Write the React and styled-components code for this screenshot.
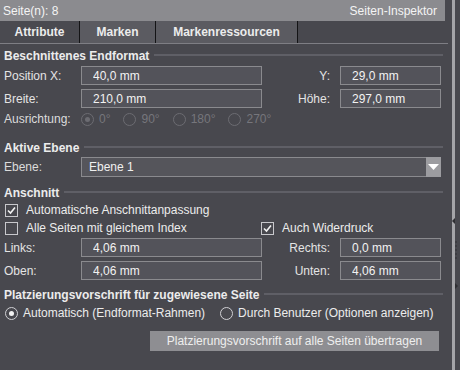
import styled, { createGlobalStyle } from 'styled-components';

const GlobalStyle = createGlobalStyle`
	body {
		margin: 0;
		background-color: #48484e;
		font-family: "Liberation Sans", Arial, sans-serif;
		font-size: 12px;
		color: #e6e6e6;
	}
`;

const Radio = ({ checked, disabled, children }) => (
	<OptionItem disabled={disabled}>
		<RadioCircle $checked={checked} $disabled={disabled} />
		{children}
	</OptionItem>
);

const Check = ({ checked, children }) => (
	<OptionItem>
		<CheckBox>
			{checked && (
				<svg width="11" height="11" viewBox="0 0 11 11">
					<path d="M2 5.5 L4.5 8 L9 2.5" fill="none" stroke="#f2f2f2" strokeWidth="1.6" />
				</svg>
			)}
		</CheckBox>
		{children}
	</OptionItem>
);

const App = () => {
	return (
		<>
			<GlobalStyle />
			<Window>
				<Panel>
					<Header>
						<span>Seite(n): 8</span>
						<span>Seiten-Inspektor</span>
					</Header>
					<TabBar>
						<Tab $width={80} $active>Attribute</Tab>
						<Tab $width={76}>Marken</Tab>
						<Tab $width={142}>Markenressourcen</Tab>
					</TabBar>
					<Body>
						<SectionTitle $top={4}>Beschnittenes Endformat</SectionTitle>
						<FieldGrid $top={2}>
							<Label>Position X:</Label>
							<Input defaultValue="40,0 mm" />
							<Label $right>Y:</Label>
							<Input defaultValue="29,0 mm" />
							<Label>Breite:</Label>
							<Input defaultValue="210,0 mm" />
							<Label $right>Höhe:</Label>
							<Input defaultValue="297,0 mm" />
						</FieldGrid>
						<OptionRow $top={3}>
							<RowLabel>Ausrichtung:</RowLabel>
							<RadioGroup $gap={13}>
								<Radio checked disabled>0°</Radio>
								<Radio disabled>90°</Radio>
								<Radio disabled>180°</Radio>
								<Radio disabled>270°</Radio>
							</RadioGroup>
						</OptionRow>

						<SectionTitle $top={13}>Aktive Ebene</SectionTitle>
						<OptionRow $top={1}>
							<RowLabel>Ebene:</RowLabel>
							<Select>
								<SelectValue>Ebene 1</SelectValue>
								<SelectArrow>
									<svg width="11" height="7" viewBox="0 0 11 7">
										<path d="M0 0 H11 L5.5 6 Z" fill="#ffffff" />
									</svg>
								</SelectArrow>
							</Select>
						</OptionRow>

						<SectionTitle $top={8}>Anschnitt</SectionTitle>
						<OptionRow $top={1} $indent>
							<Check checked>Automatische Anschnittanpassung</Check>
						</OptionRow>
						<CheckGrid $top={2}>
							<Check>Alle Seiten mit gleichem Index</Check>
							<Check checked>Auch Widerdruck</Check>
						</CheckGrid>
						<FieldGrid $top={2}>
							<Label>Links:</Label>
							<Input defaultValue="4,06 mm" />
							<Label $right>Rechts:</Label>
							<Input defaultValue="0,0 mm" />
							<Label>Oben:</Label>
							<Input defaultValue="4,06 mm" />
							<Label $right>Unten:</Label>
							<Input defaultValue="4,06 mm" />
						</FieldGrid>

						<SectionTitle $top={7}>Platzierungsvorschrift für zugewiesene Seite</SectionTitle>
						<OptionRow $top={2} $indent>
							<RadioGroup $gap={15}>
								<Radio checked>Automatisch (Endformat-Rahmen)</Radio>
								<Radio>Durch Benutzer (Optionen anzeigen)</Radio>
							</RadioGroup>
						</OptionRow>
						<ButtonRow>
							<ApplyButton>Platzierungsvorschrift auf alle Seiten übertragen</ApplyButton>
						</ButtonRow>
					</Body>
				</Panel>
				<Splitter>
					<Grip width="8" height="80" viewBox="0 0 8 80">
						<path d="M1 3 L4 0 L4 6 Z" fill="#2e2e32" />
						<circle cx="5" cy="24" r="0.8" fill="#2e2e32" />
						<circle cx="5" cy="28" r="0.8" fill="#2e2e32" />
						<circle cx="5" cy="32" r="0.8" fill="#2e2e32" />
						<circle cx="5" cy="36" r="0.8" fill="#2e2e32" />
						<circle cx="5" cy="40" r="0.8" fill="#2e2e32" />
						<path d="M7 68 L4 65 L4 71 Z" fill="#2e2e32" />
					</Grip>
				</Splitter>
			</Window>
		</>
	);
};

const Window = styled.div`
	width: 460px;
	height: 370px;
	display: flex;
	background-color: #48484e;
	overflow: hidden;
`;

const Panel = styled.div`
	flex: 0 0 448px;
	display: flex;
	flex-direction: column;
`;

const Header = styled.div`
	height: 21px;
	margin-right: 3px;
	padding: 0 8px 0 3px;
	display: flex;
	align-items: center;
	justify-content: space-between;
	background-color: #8b8b8f;
	color: #f4f4f4;
`;

const TabBar = styled.div`
	height: 22px;
	display: flex;
	border-bottom: 1px solid #7e7e84;
`;

const Tab = styled.div`
	width: ${(props) => props.$width}px;
	display: flex;
	align-items: center;
	justify-content: center;
	box-sizing: border-box;
	border-right: 1px solid #141416;
	background-color: ${(props) => (props.$active ? '#4a4a50' : '#5b5b61')};
	font-weight: bold;
	color: #ececec;
`;

const Body = styled.div`
	padding: 0 7px 0 4px;
	display: flex;
	flex-direction: column;
`;

const SectionTitle = styled.div`
	height: 16px;
	margin-top: ${(props) => props.$top}px;
	margin-right: -2px;
	display: flex;
	align-items: center;
	gap: 5px;
	font-weight: bold;
	color: #ececec;
	&::after {
		content: '';
		flex: 1;
		height: 2px;
		margin-top: -2px;
		background-color: #5f5f66;
	}
`;

const FieldGrid = styled.div`
	margin-top: ${(props) => props.$top}px;
	display: grid;
	grid-template-columns: 77px 181px 1fr 101px;
	grid-auto-rows: 19px;
	row-gap: 4px;
	align-items: center;
`;

const Label = styled.label`
	text-align: ${(props) => (props.$right ? 'right' : 'left')};
	padding-right: ${(props) => (props.$right ? '10px' : '0')};
	color: #e4e4e4;
`;

const Input = styled.input`
	width: 100%;
	height: 19px;
	box-sizing: border-box;
	padding: 0 0 0 11px;
	border: 1px solid #8a8a8e;
	background-color: #53535a;
	color: #f2f2f2;
	font-family: "Liberation Sans", Arial, sans-serif;
	font-size: 12px;
	outline: none;
`;

const OptionRow = styled.div`
	min-height: 16px;
	margin-top: ${(props) => props.$top}px;
	padding-left: ${(props) => (props.$indent ? '1px' : '0')};
	display: flex;
	align-items: center;
`;

const RowLabel = styled.span`
	flex: 0 0 77px;
	color: #dcdcdc;
`;

const RadioGroup = styled.div`
	display: flex;
	align-items: center;
	gap: ${(props) => props.$gap}px;
`;

const OptionItem = styled.span`
	display: flex;
	align-items: center;
	gap: 5px;
	color: ${(props) => (props.disabled ? '#76767c' : '#ececec')};
	white-space: nowrap;
`;

const RadioCircle = styled.span`
	width: 13px;
	height: 13px;
	box-sizing: border-box;
	border-radius: 50%;
	border: 1px solid ${(props) => (props.$disabled ? '#6c6c72' : '#d0d0d4')};
	display: flex;
	align-items: center;
	justify-content: center;
	&::after {
		content: '';
		display: ${(props) => (props.$checked ? 'block' : 'none')};
		width: 5px;
		height: 5px;
		border-radius: 50%;
		background-color: ${(props) => (props.$disabled ? '#6c6c72' : '#f2f2f2')};
	}
`;

const CheckBox = styled.span`
	width: 13px;
	height: 13px;
	box-sizing: border-box;
	margin-right: 3px;
	border: 1px solid #c8c8cc;
	display: flex;
	align-items: center;
	justify-content: center;
`;

const CheckGrid = styled.div`
	min-height: 16px;
	margin-top: ${(props) => props.$top}px;
	padding-left: 1px;
	display: grid;
	grid-template-columns: 256px 1fr;
	align-items: center;
`;

const Select = styled.div`
	flex: 1;
	height: 20px;
	box-sizing: border-box;
	display: flex;
	border-top: 1px solid #8a8a8e;
	border-bottom: 1px solid #8a8a8e;
	border-left: 1px solid #8a8a8e;
	background-color: #55555b;
`;

const SelectValue = styled.span`
	flex: 1;
	padding-left: 7px;
	display: flex;
	align-items: center;
	color: #f0f0f0;
`;

const SelectArrow = styled.span`
	width: 15px;
	margin: -1px 0;
	display: flex;
	align-items: center;
	justify-content: center;
	background-color: #9c9ca0;
`;

const ButtonRow = styled.div`
	margin-top: 10px;
	padding-right: 2px;
	display: flex;
	justify-content: flex-end;
`;

const ApplyButton = styled.button`
	width: 289px;
	height: 20px;
	padding: 0;
	border: 0;
	background-color: #8e8e92;
	color: #eeeeee;
	font-family: "Liberation Sans", Arial, sans-serif;
	font-size: 12px;
`;

const Splitter = styled.div`
	flex: 1;
	position: relative;
	&::before {
		content: '';
		position: absolute;
		top: 0;
		bottom: 0;
		left: 4px;
		width: 3px;
		background-color: #a4a4a8;
	}
`;

const Grip = styled.svg`
	position: absolute;
	left: 3px;
	top: 218px;
`;

export default App;
